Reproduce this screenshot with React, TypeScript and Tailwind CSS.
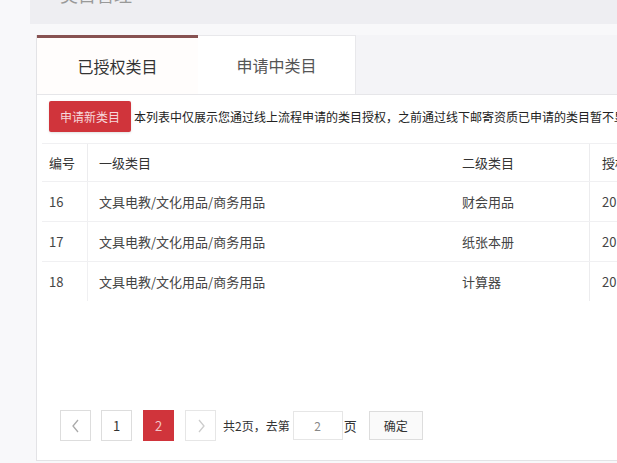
const rows = [
  { id: "16", first: "文具电教/文化用品/商务用品", second: "财会用品", date: "20" },
  { id: "17", first: "文具电教/文化用品/商务用品", second: "纸张本册", date: "20" },
  { id: "18", first: "文具电教/文化用品/商务用品", second: "计算器", date: "20" },
];

const font = { fontFamily: '"Noto Sans CJK SC", "Liberation Sans", sans-serif' };

export default function App() {
  return (
    <div
      className="w-[617px] h-[463px] overflow-hidden bg-[#f8f8fa] text-[#333]"
      style={font}
    >
      {/* top header band, mostly scrolled away */}
      <div className="ml-[30px] h-[24px] overflow-hidden bg-[#eeeef2]">
        <div className="ml-[30px] -mt-[16px] text-[18px] leading-[20px] text-[#999]">类目管理</div>
      </div>

      <div className="mt-[11px] ml-[36px] w-[760px] h-[426px] flex flex-col border-l border-b border-[#e3e3e6] bg-white">
        {/* tabs */}
        <div className="flex h-[60px] bg-[#f4f4f7] border-b border-[#e6e6e9]">
          <div className="w-[161px] border-t-[3px] border-[#875252] bg-[#fffdfc] flex items-center justify-center text-[16px] text-[#333]">
            已授权类目
          </div>
          <div className="w-[158px] border-t border-r border-[#e8e8eb] bg-white flex items-center justify-center text-[16px] text-[#555]">
            申请中类目
          </div>
        </div>

        {/* notice row */}
        <div className="flex items-center mt-[6px] ml-[12px]">
          <button className="h-[31px] px-[11px] rounded-[2px] bg-[#d0343b] text-[12px] text-[#f6d9db] shadow-sm">
            申请新类目
          </button>
          <span className="ml-[3px] text-[12px] text-[#222] whitespace-nowrap">
            本列表中仅展示您通过线上流程申请的类目授权，之前通过线下邮寄资质已申请的类目暂不显示
          </span>
        </div>

        {/* table */}
        <div className="mt-[11px] ml-[5px] text-[13px] text-[#444]">
          <div className="grid grid-cols-[46px_362px_140px_200px] h-[38px] items-center border-t border-[#f0f0f2] text-[#333]">
            <div className="pl-[7px] h-full flex items-center border-r border-[#ececee]">编号</div>
            <div className="pl-[11px]">一级类目</div>
            <div className="pl-[12px] h-full flex items-center border-r border-[#ececee]">二级类目</div>
            <div className="pl-[12px]">授权时间</div>
          </div>
          {rows.map((r) => (
            <div
              key={r.id}
              className="grid grid-cols-[46px_362px_140px_200px] h-[40px] items-center border-t border-[#f0f0f2]"
            >
              <div className="pl-[7px] h-full flex items-center border-r border-[#f0f0f2]">{r.id}</div>
              <div className="pl-[11px]">{r.first}</div>
              <div className="pl-[12px] h-full flex items-center border-r border-[#ececee]">{r.second}</div>
              <div className="pl-[12px]">{r.date}18-01-01</div>
            </div>
          ))}
        </div>

        {/* pagination */}
        <div className="mt-auto mb-[19px] ml-[23px] flex items-center text-[13px]">
          <button className="w-[31px] h-[31px] border border-[#ddd] bg-white flex items-center justify-center text-[#aaa]">
            <svg width="10" height="14" viewBox="0 0 10 14" fill="none" stroke="currentColor" strokeWidth="1.3">
              <path d="M7 1L2 7l5 6" />
            </svg>
          </button>
          <button className="ml-[10px] w-[31px] h-[31px] border border-[#ddd] bg-white text-[#333]">1</button>
          <button className="ml-[11px] w-[31px] h-[31px] bg-[#d0343b] text-[#f3c6c8]">2</button>
          <button className="ml-[11px] w-[31px] h-[31px] border border-[#e6e6e6] bg-white flex items-center justify-center text-[#ccc]">
            <svg width="10" height="14" viewBox="0 0 10 14" fill="none" stroke="currentColor" strokeWidth="1.3">
              <path d="M3 1l5 6-5 6" />
            </svg>
          </button>
          <span className="ml-[7px] text-[12px] text-[#333]">共2页，去第</span>
          <div className="ml-[3px] w-[50px] h-[29px] border border-[#e6e6e6] bg-white flex items-center justify-center text-[12px] text-[#888]">
            2
          </div>
          <span className="ml-[1px] text-[13px] text-[#333]">页</span>
          <button className="ml-[12px] w-[54px] h-[29px] border border-[#ddd] bg-[#fafafa] text-[12px] text-[#333]">
            确定
          </button>
        </div>
      </div>
    </div>
  );
}
